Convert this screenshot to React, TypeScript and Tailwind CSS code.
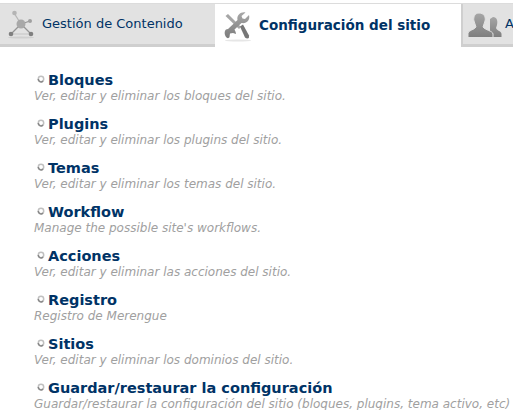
const items = [
  { title: "Bloques", desc: "Ver, editar y eliminar los bloques del sitio." },
  { title: "Plugins", desc: "Ver, editar y eliminar los plugins del sitio." },
  { title: "Temas", desc: "Ver, editar y eliminar los temas del sitio." },
  { title: "Workflow", desc: "Manage the possible site's workflows." },
  { title: "Acciones", desc: "Ver, editar y eliminar las acciones del sitio." },
  { title: "Registro", desc: "Registro de Merengue" },
  { title: "Sitios", desc: "Ver, editar y eliminar los dominios del sitio." },
  {
    title: "Guardar/restaurar la configuración",
    desc: "Guardar/restaurar la configuración del sitio (bloques, plugins, tema activo, etc)",
  },
];

function NodesIcon() {
  return (
    <svg width="36" height="36" viewBox="4 6 36 36" className="shrink-0">
      <ellipse cx="21" cy="37.5" rx="13" ry="1" fill="#cfcfcf" />
      <g stroke="#949494" strokeWidth="1.3" fill="none">
        <path d="M21 24 L14 13" stroke="#b5b5b5" />
        <path d="M21 24 L30 21" />
        <path d="M21 24 L31 34" />
        <path d="M21 24 L11 34" />
        <path d="M11 34 L31 34" stroke="#c4c4c4" strokeWidth="1" />
      </g>
      <circle cx="21" cy="24" r="4.5" fill="#a8a8a8" />
      <circle cx="14.5" cy="13" r="2.3" fill="#b4b4b4" />
      <circle cx="30" cy="21" r="2" fill="#a0a0a0" />
      <circle cx="31" cy="34" r="2.3" fill="#808080" />
      <circle cx="11" cy="34" r="2.3" fill="#808080" />
    </svg>
  );
}

function ToolsIcon() {
  return (
    <svg width="36" height="36" viewBox="222 6 36 36" className="shrink-0">
      <defs>
        <linearGradient id="wrench" x1="0" y1="0" x2="0" y2="1">
          <stop offset="0" stopColor="#a8a8a8" />
          <stop offset="1" stopColor="#7c7c7c" />
        </linearGradient>
      </defs>
      <ellipse cx="238" cy="38.5" rx="13" ry="1" fill="#e6e6e6" />
      <path d="M225.5 14 L228 12 L241 25 L239 27 Z" fill="#a6a6a6" />
      <path d="M240 24.5 L243 22.5 L249 33.5 Q249.5 36 247.5 36.5 Q246 36.5 245 35.5 Z" fill="#767676" />
      <path
        d="M249 13 L245 17 L242.5 16.5 L241.5 14 L245.5 10.5 C241 9.5 236.5 13 237.5 18 L228 27 C224 27 224 32 226 35 C227 36.5 229 36.5 229.5 35 L230 31.5 L233 31 L236 32 C236 30 235 29 234.5 27.5 L241.5 21 C246.5 22 250.5 18 249 13 Z"
        fill="url(#wrench)"
      />
    </svg>
  );
}

function UsersIcon() {
  return (
    <svg width="36" height="36" viewBox="466 6 36 36" className="shrink-0">
      <defs>
        <linearGradient id="person" x1="0" y1="0" x2="0" y2="1">
          <stop offset="0" stopColor="#a6a6a6" />
          <stop offset="1" stopColor="#7e7e7e" />
        </linearGradient>
      </defs>
      <path
        d="M493 17 C497 17 498 21 497 25 L496 28 C497 31 501.5 31 501.5 34 L501.5 37 L490 37 L490 19 Z"
        fill="url(#person)"
      />
      <path
        d="M479 13 C484 13 486 17 485 21 L483 27 C485 30 493 31 493 34 L493 37.5 L468 37.5 L468 33 C469 30 474 30 476 27 L474 21 C473 17 475 13 479 13 Z"
        fill="url(#person)"
        stroke="#e2e2e2"
        strokeWidth="1"
      />
    </svg>
  );
}

function Bullet() {
  return (
    <svg width="8" height="8" viewBox="0 0 8 8" className="mr-[3px] ml-[3px] -mt-[2px] shrink-0">
      <circle cx="4" cy="4" r="2.7" fill="none" stroke="#c0c0c0" strokeWidth="1.5" />
      <path d="M1.3 4 A2.7 2.7 0 0 0 6 6" fill="none" stroke="#888" strokeWidth="1.5" />
    </svg>
  );
}

export default function App() {
  return (
    <div className="h-[410px] w-[513px] overflow-hidden bg-white font-['DejaVu_Sans',sans-serif]">
      <div className="pt-[3px]">
        <div className="flex h-[44px] overflow-hidden border-t border-[#dcdcdc]">
          <div className="flex w-[215px] shrink-0 items-center gap-[2px] border-b-[3px] border-[#cfcfcf] bg-[#e2e2e2] pl-[4px]">
            <NodesIcon />
            <span className="text-[13px] text-[#003366]">Gestión de Contenido</span>
          </div>
          <div className="flex w-[246px] shrink-0 items-center gap-[1px] bg-white pl-[7px]">
            <ToolsIcon />
            <span className="text-[13.5px] font-bold text-[#003366]">Configuración del sitio</span>
          </div>
          <div className="flex w-[60px] shrink-0 items-center gap-[3px] border-b-[3px] border-l-[2px] border-[#cfcfcf] bg-[#e2e2e2] pl-[3px]">
            <UsersIcon />
            <span className="text-[13px] text-[#003366]">A</span>
          </div>
        </div>
      </div>
      <ul className="pt-[23px] pl-[34px]">
        {items.map((item) => (
          <li key={item.title} className="h-[44px]">
            <div className="flex h-[20px] items-center">
              <Bullet />
              <span className="text-[14.5px] leading-[20px] font-bold text-[#003366]">{item.title}</span>
            </div>
            <div className="text-[12px] leading-[12px] whitespace-nowrap text-[#a0a0a0] italic">{item.desc}</div>
          </li>
        ))}
      </ul>
    </div>
  );
}
